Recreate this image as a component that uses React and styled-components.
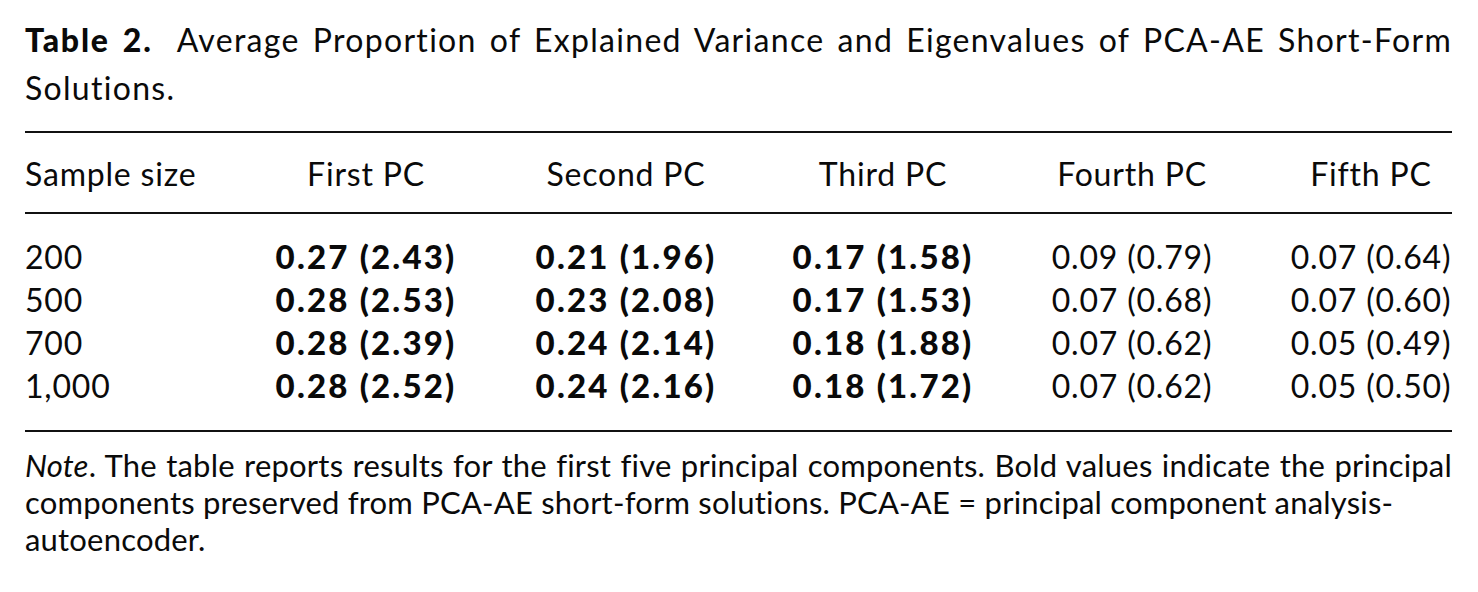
import React from "react";
import styled, { createGlobalStyle } from "styled-components";

const GlobalStyle = createGlobalStyle`
  body {
    margin: 0;
    background: #fff;
    color: #0a0a0a;
    font-family: Lato, "Open Sans", sans-serif;
  }
`;

const Page = styled.div`
  width: 1427px;
  padding: 16px 0 0 25px;
`;

const Caption = styled.div`
  font-size: 32px;
  line-height: 48px;
  letter-spacing: 1.3px;
`;

// one typeset line; $justify spreads it over the full measure
const Line = styled.span`
  display: block;
  white-space: nowrap;
  text-align: ${(p) => (p.$justify ? "justify" : "left")};
  text-align-last: ${(p) => (p.$justify ? "justify" : "left")};
`;

const Label = styled.strong`
  font-weight: 900;
  letter-spacing: 1.8px;
  margin-right: 12px;
`;

const Table = styled.div`
  margin-top: 19px;
  border-top: 2px solid #111;
  border-bottom: 2px solid #111;
`;

const Row = styled.div`
  display: grid;
  grid-template-columns: 212px 258px 262px 252px 246px 1fr;
  font-size: 32px;
  line-height: 43px;
  letter-spacing: 0.8px;

  & > :last-child {
    padding-left: 35px;
  }
`;

const Head = styled.div`
  padding: 19px 0 17px;
  border-bottom: 2px solid #111;
`;

const Body = styled.div`
  padding: 21px 0 23px;
`;

const Cell = styled.div`
  text-align: ${(p) => (p.$first ? "left" : "center")};
  white-space: nowrap;
  ${(p) =>
    p.$bold &&
    `
    font-weight: 900;
    font-size: 33px;
    letter-spacing: 2.2px;
  `}
`;

const Note = styled.div`
  margin-top: 15px;
  font-size: 31px;
  line-height: 37px;
  letter-spacing: 0.2px;
`;

const headers = ["Sample size", "First PC", "Second PC", "Third PC", "Fourth PC", "Fifth PC"];

const rows = [
  ["200", "0.27 (2.43)", "0.21 (1.96)", "0.17 (1.58)", "0.09 (0.79)", "0.07 (0.64)"],
  ["500", "0.28 (2.53)", "0.23 (2.08)", "0.17 (1.53)", "0.07 (0.68)", "0.07 (0.60)"],
  ["700", "0.28 (2.39)", "0.24 (2.14)", "0.18 (1.88)", "0.07 (0.62)", "0.05 (0.49)"],
  ["1,000", "0.28 (2.52)", "0.24 (2.16)", "0.18 (1.72)", "0.07 (0.62)", "0.05 (0.50)"],
];

// first three PCs are the ones kept by the short form
const boldCols = [1, 2, 3];

const App = () => (
  <Page>
    <GlobalStyle />
    <Caption>
      <Line $justify>
        <Label>Table 2.</Label> Average Proportion of Explained Variance and Eigenvalues of PCA-AE Short-Form
      </Line>
      <Line>Solutions.</Line>
    </Caption>

    <Table>
      <Head>
        <Row>
          {headers.map((h, i) => (
            <Cell key={h} $first={i === 0}>
              {h}
            </Cell>
          ))}
        </Row>
      </Head>
      <Body>
        {rows.map((r) => (
          <Row key={r[0]}>
            {r.map((v, i) => (
              <Cell key={i} $first={i === 0} $bold={boldCols.includes(i)}>
                {v}
              </Cell>
            ))}
          </Row>
        ))}
      </Body>
    </Table>

    <Note>
      <Line $justify>
        <em>Note</em>. The table reports results for the first five principal components. Bold values indicate the principal
      </Line>
      <Line>components preserved from PCA-AE short-form solutions. PCA-AE = principal component analysis-</Line>
      <Line>autoencoder.</Line>
    </Note>
  </Page>
);

export default App;
